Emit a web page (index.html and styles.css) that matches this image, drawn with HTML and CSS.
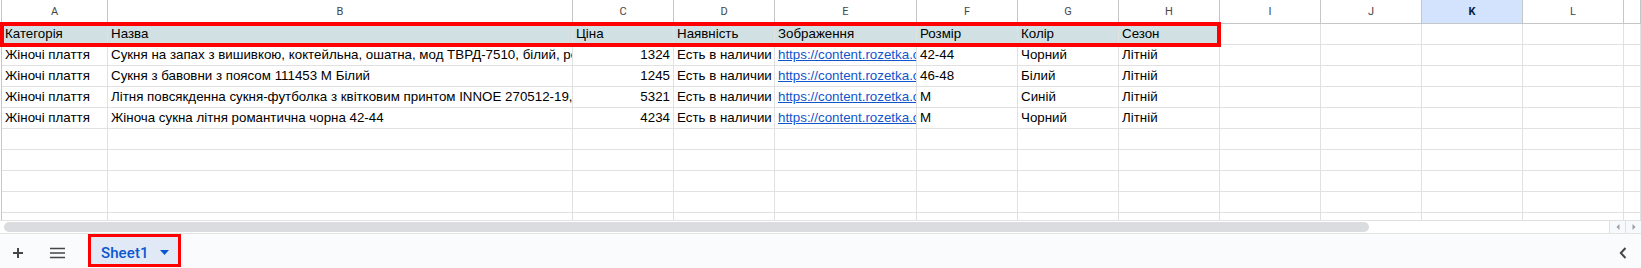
FILE: index.html
```html
<!DOCTYPE html>
<html lang="uk">
<head>
<meta charset="utf-8">
<title>Sheet1</title>
<link rel="stylesheet" href="styles.css">
</head>
<body>
<div class="sheet">
  <div class="grid-wrap">
    <div class="grid">
      <div class="ch">A</div><div class="ch">B</div><div class="ch">C</div><div class="ch">D</div><div class="ch">E</div><div class="ch">F</div><div class="ch">G</div><div class="ch">H</div><div class="ch">I</div><div class="ch">J</div><div class="ch sel">K</div><div class="ch">L</div><div class="ch"></div>

      <div class="c hd">Категорія</div><div class="c hd">Назва</div><div class="c hd">Ціна</div><div class="c hd">Наявність</div><div class="c hd">Зображення</div><div class="c hd">Розмір</div><div class="c hd">Колір</div><div class="c hd">Сезон</div><div class="c"></div><div class="c"></div><div class="c"></div><div class="c"></div><div class="c"></div>

      <div class="c">Жіночі плаття</div><div class="c">Сукня на запах з вишивкою, коктейльна, ошатна, мод ТВРД-7510, білий, розмір 42-44</div><div class="c num">1324</div><div class="c">Есть в наличии</div><div class="c"><span class="link">https://content.rozetka.com.ua/goods/images/big/1.jpg</span></div><div class="c">42-44</div><div class="c">Чорний</div><div class="c">Літній</div><div class="c"></div><div class="c"></div><div class="c"></div><div class="c"></div><div class="c"></div>

      <div class="c">Жіночі плаття</div><div class="c">Сукня з бавовни з поясом 111453 M Білий</div><div class="c num">1245</div><div class="c">Есть в наличии</div><div class="c"><span class="link">https://content.rozetka.com.ua/goods/images/big/2.jpg</span></div><div class="c">46-48</div><div class="c">Білий</div><div class="c">Літній</div><div class="c"></div><div class="c"></div><div class="c"></div><div class="c"></div><div class="c"></div>

      <div class="c">Жіночі плаття</div><div class="c">Літня повсякденна сукня-футболка з квітковим принтом INNOE 270512-19, синя</div><div class="c num">5321</div><div class="c">Есть в наличии</div><div class="c"><span class="link">https://content.rozetka.com.ua/goods/images/big/3.jpg</span></div><div class="c">M</div><div class="c">Синій</div><div class="c">Літній</div><div class="c"></div><div class="c"></div><div class="c"></div><div class="c"></div><div class="c"></div>

      <div class="c">Жіночі плаття</div><div class="c">Жіноча сукна літня романтична чорна 42-44</div><div class="c num">4234</div><div class="c">Есть в наличии</div><div class="c"><span class="link">https://content.rozetka.com.ua/goods/images/big/4.jpg</span></div><div class="c">M</div><div class="c">Чорний</div><div class="c">Літній</div><div class="c"></div><div class="c"></div><div class="c"></div><div class="c"></div><div class="c"></div>

      <div class="c"></div><div class="c"></div><div class="c"></div><div class="c"></div><div class="c"></div><div class="c"></div><div class="c"></div><div class="c"></div><div class="c"></div><div class="c"></div><div class="c"></div><div class="c"></div><div class="c"></div>
      <div class="c"></div><div class="c"></div><div class="c"></div><div class="c"></div><div class="c"></div><div class="c"></div><div class="c"></div><div class="c"></div><div class="c"></div><div class="c"></div><div class="c"></div><div class="c"></div><div class="c"></div>
      <div class="c"></div><div class="c"></div><div class="c"></div><div class="c"></div><div class="c"></div><div class="c"></div><div class="c"></div><div class="c"></div><div class="c"></div><div class="c"></div><div class="c"></div><div class="c"></div><div class="c"></div>
      <div class="c"></div><div class="c"></div><div class="c"></div><div class="c"></div><div class="c"></div><div class="c"></div><div class="c"></div><div class="c"></div><div class="c"></div><div class="c"></div><div class="c"></div><div class="c"></div><div class="c"></div>
      <div class="c"></div><div class="c"></div><div class="c"></div><div class="c"></div><div class="c"></div><div class="c"></div><div class="c"></div><div class="c"></div><div class="c"></div><div class="c"></div><div class="c"></div><div class="c"></div><div class="c"></div>
    </div>
    <div class="mark-row"></div>
  </div>

  <div class="hscroll">
    <div class="track"><div class="thumb"></div></div>
    <div class="arrows">
      <div class="arrow"><svg width="6" height="8" viewBox="0 0 6 8"><path d="M4.5 1 L1.5 4 L4.5 7 Z" fill="#9aa0a6"/></svg></div>
      <div class="arrow"><svg width="6" height="8" viewBox="0 0 6 8"><path d="M1.5 1 L4.5 4 L1.5 7 Z" fill="#9aa0a6"/></svg></div>
    </div>
  </div>

  <div class="bottombar">
    <div class="btn plus">
      <svg width="12" height="12" viewBox="0 0 12 12"><path d="M6 1 V11 M1 6 H11" stroke="#444746" stroke-width="2"/></svg>
    </div>
    <div class="btn menu">
      <svg width="15" height="12" viewBox="0 0 15 12"><path d="M0 1.5 H15 M0 6 H15 M0 10.5 H15" stroke="#444746" stroke-width="1.6"/></svg>
    </div>
    <div class="tab">
      <span class="tab-name">Sheet1</span>
      <svg class="caret" width="9" height="5" viewBox="0 0 9 5"><path d="M0 0 H9 L4.5 5 Z" fill="#0b57d0"/></svg>
    </div>
    <div class="spacer"></div>
    <div class="btn chevron">
      <svg width="8" height="12" viewBox="0 0 8 12"><path d="M6.5 1 L1.8 6 L6.5 11" stroke="#444746" stroke-width="2" fill="none"/></svg>
    </div>
  </div>
</div>
</body>
</html>
```

FILE: styles.css
```css
* { box-sizing: border-box; }
html, body { margin: 0; padding: 0; background: #ffffff; }
body { width: 1641px; height: 268px; overflow: hidden; font-family: "Liberation Sans", Arial, sans-serif; }

.sheet { display: flex; flex-direction: column; width: 1641px; height: 268px; }

.grid-wrap { position: relative; height: 220px; overflow: hidden; padding-left: 1px; }

.grid {
  display: grid;
  grid-template-columns: 106px 465px 101px 101px 142px 101px 101px 101px 101px 101px 101px 101px 1fr;
  grid-auto-rows: 21px;
  grid-template-rows: 24px;
  border-left: 1px solid #c4c7c5;
}

.ch {
  border-right: 1px solid #c4c7c5;
  border-bottom: 1px solid #c4c7c5;
  font-family: Roboto, "Liberation Sans", sans-serif;
  font-size: 11px;
  color: #444746;
  display: flex;
  align-items: center;
  justify-content: center;
  padding-bottom: 1px;
  background: #ffffff;
}
.ch.sel { background: #d3e3fd; color: #041e49; font-weight: 700; }

.c {
  border-right: 1px solid #e1e1e1;
  border-bottom: 1px solid #e1e1e1;
  font-size: 13.333px;
  line-height: 20px;
  color: #000000;
  padding: 0 3px;
  white-space: nowrap;
  overflow: hidden;
}
.c.hd { background: #d0e0e3; }
.c.num { text-align: right; }
.link { color: #1155cc; text-decoration: underline; }

.mark-row {
  position: absolute;
  left: 0;
  top: 22px;
  width: 1221px;
  height: 25px;
  border: 4px solid #ff0000;
}

.hscroll {
  height: 13px;
  border-top: 1px solid #e1e1e1;
  display: flex;
  background: #ffffff;
}
.track { flex: 1; padding: 1px 0 1px 4px; }
.thumb { width: 1365px; height: 10px; border-radius: 5px; background: #dadce0; }
.arrows { display: flex; width: 32px; }
.arrow {
  width: 16px;
  border-left: 1px solid #e1e1e1;
  background: #f8f9fa;
  display: flex;
  align-items: center;
  justify-content: center;
}

.bottombar {
  flex: 1;
  border-top: 1px solid #e1e3e1;
  background: #f9fbfd;
  display: flex;
  align-items: center;
  padding-left: 12px;
}
.btn { display: flex; align-items: center; justify-content: center; }
.plus { width: 12px; height: 12px; margin-top: 4px; }
.menu { width: 15px; height: 12px; margin-left: 26px; margin-top: 4px; }
.tab {
  margin-left: 23px;
  align-self: stretch;
  width: 93px;
  border: 3px solid #ff0000;
  margin-bottom: 1px;
  background: #e1e9f7;
  display: flex;
  align-items: center;
  padding-left: 10px;
  padding-top: 4px;
}
.tab-name {
  font-family: Roboto, "Liberation Sans", sans-serif;
  font-weight: 500;
  font-size: 15px;
  color: #0b57d0;
  letter-spacing: 0.1px;
}
.caret { margin-left: 11px; }
.spacer { flex: 1; }
.chevron { width: 8px; height: 12px; margin-right: 14px; margin-top: 4px; }
```
